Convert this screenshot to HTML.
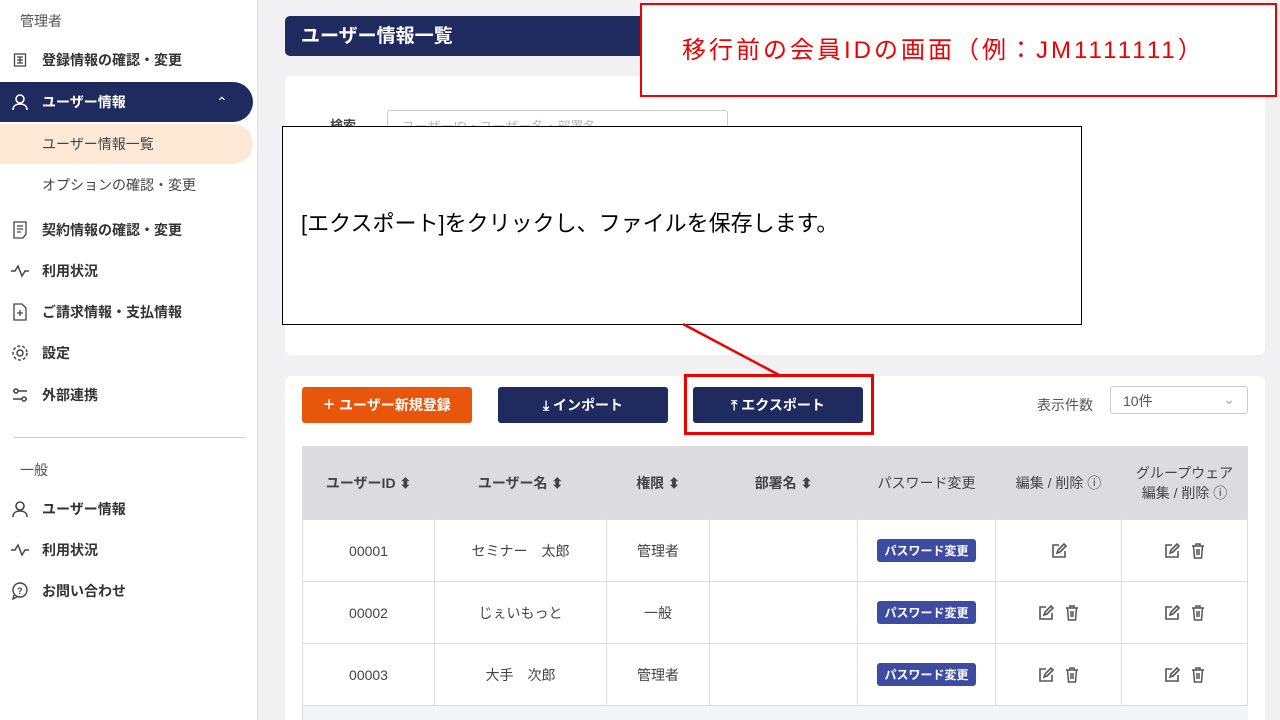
<!DOCTYPE html>
<html style="overflow:hidden;width:1280px;height:720px"><head><meta charset="utf-8"><style>
*{box-sizing:border-box;margin:0;padding:0}
body{width:1280px;height:720px;overflow:hidden;background:#f1f1f3;font-family:"Liberation Sans","Noto Sans CJK JP",sans-serif;position:relative;color:#333}
.abs{position:absolute}
.side{left:0;top:0;width:258px;height:720px;background:#fff;border-right:1px solid #ddd}
.it{position:absolute;left:0;width:253px;height:40px;display:flex;align-items:center;font-size:14px;font-weight:bold;color:#333}
.it .ic{width:20px;margin-left:10px;margin-right:12px;display:flex;justify-content:center}
.sub{font-weight:normal;padding-left:42px;color:#444}
.card{background:#fff;border-radius:6px}
.btn{position:absolute;top:387px;height:36px;border-radius:3px;color:#fff;font-size:14px;font-weight:bold;display:flex;align-items:center;justify-content:center;gap:4px}
table{border-collapse:collapse;position:absolute;left:302px;top:446px;font-size:14px}
td,th{border:1px solid #ddd;text-align:center;color:#444}
th{background:#dcdcde;height:73px;font-weight:bold;color:#444}
td{height:62px;background:#fff}
.pw{display:inline-block;background:#3d4ba0;color:#fff;font-size:12px;font-weight:bold;padding:3px 7px;border-radius:3px}
svg.i{width:18px;height:18px;vertical-align:middle;margin:0 4px}
</style></head><body>
<div class="abs side">
<div class="abs" style="left:20px;top:11px;font-size:14px;color:#555">管理者</div>
<div class="it" style="top:40px"><span class="ic"><svg width="14" height="14" viewBox="0 0 14 14" fill="none" stroke="#444" stroke-width="1.3"><rect x="1.5" y="1" width="11" height="12"/><path d="M4 4h6M4 7h6M4 10h6M7 4v6"/></svg></span>登録情報の確認・変更</div>
<div class="it" style="top:82px;background:#1f2a5e;color:#fff;border-radius:0 20px 20px 0"><span class="ic"><svg width="18" height="18" viewBox="0 0 18 18" fill="none" stroke="#fff" stroke-width="1.6"><circle cx="9" cy="6" r="4"/><path d="M2 17c0-4 3-6 7-6s7 2 7 6"/></svg></span>ユーザー情報<span style="position:absolute;left:216px;font-weight:normal">&#8963;</span></div>
<div class="it sub" style="top:124px;background:#fde8d6;border-radius:0 20px 20px 0">ユーザー情報一覧</div>
<div class="it sub" style="top:165px">オプションの確認・変更</div>
<div class="it" style="top:210px"><span class="ic"><svg width="14" height="18" viewBox="0 0 14 18" fill="none" stroke="#444" stroke-width="1.3"><path d="M1 1h12v12l-3 4H1z"/><path d="M4 5h6M4 8h6M4 11h4"/></svg></span>契約情報の確認・変更</div>
<div class="it" style="top:251px"><span class="ic"><svg width="18" height="14" viewBox="0 0 18 14" fill="none" stroke="#444" stroke-width="1.5"><path d="M0 7h4l3-5 4 10 3-5h4"/></svg></span>利用状況</div>
<div class="it" style="top:292px"><span class="ic"><svg width="14" height="18" viewBox="0 0 14 18" fill="none" stroke="#444" stroke-width="1.3"><path d="M1 1h8l4 4v12H1z"/><path d="M7 7v6M4 10h6"/></svg></span>ご請求情報・支払情報</div>
<div class="it" style="top:333px"><span class="ic"><svg width="18" height="18" viewBox="0 0 18 18" fill="none" stroke="#444" stroke-width="1.5"><circle cx="9" cy="9" r="3"/><circle cx="9" cy="9" r="7" stroke-dasharray="3 2"/></svg></span>設定</div>
<div class="it" style="top:375px"><span class="ic"><svg width="18" height="16" viewBox="0 0 18 16" fill="none" stroke="#444" stroke-width="1.5"><path d="M2 4h14M2 12h14"/><circle cx="5" cy="4" r="2" fill="#fff"/><circle cx="13" cy="12" r="2" fill="#fff"/></svg></span>外部連携</div>
<div class="abs" style="left:14px;top:437px;width:231px;border-top:1px solid #ccc"></div>
<div class="abs" style="left:20px;top:460px;font-size:14px;color:#555">一般</div>
<div class="it" style="top:489px"><span class="ic"><svg width="18" height="18" viewBox="0 0 18 18" fill="none" stroke="#444" stroke-width="1.6"><circle cx="9" cy="6" r="4"/><path d="M2 17c0-4 3-6 7-6s7 2 7 6"/></svg></span>ユーザー情報</div>
<div class="it" style="top:530px"><span class="ic"><svg width="18" height="14" viewBox="0 0 18 14" fill="none" stroke="#444" stroke-width="1.5"><path d="M0 7h4l3-5 4 10 3-5h4"/></svg></span>利用状況</div>
<div class="it" style="top:571px"><span class="ic"><svg width="18" height="18" viewBox="0 0 18 18" fill="none" stroke="#444" stroke-width="1.4"><circle cx="9" cy="8" r="7"/><path d="M3 13l-1 4 4-2"/><text x="6" y="12" font-size="9" fill="#444" stroke="none">?</text></svg></span>お問い合わせ</div>
</div>

<div class="abs" style="left:285px;top:16px;width:980px;height:40px;background:#1f2a5e;border-radius:5px;color:#fff;font-weight:bold;font-size:19px;padding:5px 0 0 16px">ユーザー情報一覧</div>
<div class="abs card" style="left:285px;top:76px;width:980px;height:279px"></div>
<div class="abs" style="left:330px;top:115px;font-size:13px;font-weight:bold;color:#444">検索</div>
<div class="abs" style="left:387px;top:110px;width:341px;height:30px;border:1px solid #ccc;border-radius:3px;font-size:13px;color:#bbb;padding:5px 14px">ユーザーID・ユーザー名・部署名</div>

<div class="abs card" style="left:285px;top:376px;width:980px;height:344px;border-radius:6px 6px 0 0"></div>
<div class="btn" style="left:302px;width:170px;background:#e8560c"><span style="font-size:20px;font-weight:normal">+</span>ユーザー新規登録</div>
<div class="btn" style="left:498px;width:170px;background:#1f2a5e">⤓ インポート</div>
<div class="btn" style="left:693px;width:170px;background:#1f2a5e">⤒ エクスポート</div>
<div class="abs" style="left:684px;top:374px;width:190px;height:61px;border:3px solid #e00"></div>
<div class="abs" style="left:1037px;top:395px;font-size:14px;color:#555">表示件数</div>
<div class="abs" style="left:1110px;top:386px;width:138px;height:28px;border:1px solid #ccc;border-radius:3px;font-size:14px;color:#555;padding:4px 12px">10件<span style="position:absolute;right:12px;color:#aaa">&#8964;</span></div>

<table>
<tr><th style="width:132px">ユーザーID ⬍</th><th style="width:172px">ユーザー名 ⬍</th><th style="width:103px">権限 ⬍</th><th style="width:148px">部署名 ⬍</th><th style="width:138px;font-weight:normal">パスワード変更</th><th style="width:126px;font-weight:normal">編集 / 削除 ⓘ</th><th style="width:126px;font-weight:normal">グループウェア<br>編集 / 削除 ⓘ</th></tr>
<tr><td>00001</td><td>セミナー　太郎</td><td>管理者</td><td></td><td><span class="pw">パスワード変更</span></td><td>E</td><td>ED</td></tr>
<tr><td>00002</td><td>じぇいもっと</td><td>一般</td><td></td><td><span class="pw">パスワード変更</span></td><td>ED</td><td>ED</td></tr>
<tr><td>00003</td><td>大手　次郎</td><td>管理者</td><td></td><td><span class="pw">パスワード変更</span></td><td>ED</td><td>ED</td></tr>
</table>
<div class="abs" style="left:302px;top:706px;width:946px;height:14px;background:#f3f4f8;border-left:1px solid #ddd"></div>

<div class="abs" style="left:282px;top:126px;width:800px;height:199px;background:#fff;border:1.5px solid #000"></div>
<div class="abs" style="left:301px;top:206px;font-size:22px;color:#000">[エクスポート]をクリックし、ファイルを保存します。</div>
<svg class="abs" style="left:0;top:0" width="1280" height="720"><line x1="683" y1="324" x2="779" y2="375" stroke="#e00" stroke-width="2.5"/></svg>
<div class="abs" style="left:640px;top:3px;width:637px;height:94px;background:#fff;border:2px solid #e00"></div>
<div class="abs" style="left:682px;top:30px;font-size:24px;color:#e00;letter-spacing:3px;white-space:nowrap">移行前の会員IDの画面（例：JM1111111）</div>

<script>
var E='<svg class="i" viewBox="0 0 18 18" fill="none" stroke="#555" stroke-width="1.6"><path d="M9 3H3v12h12V9"/><path d="M7 11l1-3 6-6 2 2-6 6z"/></svg>';
var D='<svg class="i" viewBox="0 0 18 18" fill="none" stroke="#555" stroke-width="1.5"><path d="M3 4h12M7 4V2h4v2M4.5 4l1 12h7l1-12M8 7v6M10 7v6"/></svg>';
document.querySelectorAll('td').forEach(function(t){if(t.textContent=='E')t.innerHTML=E;else if(t.textContent=='ED')t.innerHTML=E+D;});
</script>
</body></html>
